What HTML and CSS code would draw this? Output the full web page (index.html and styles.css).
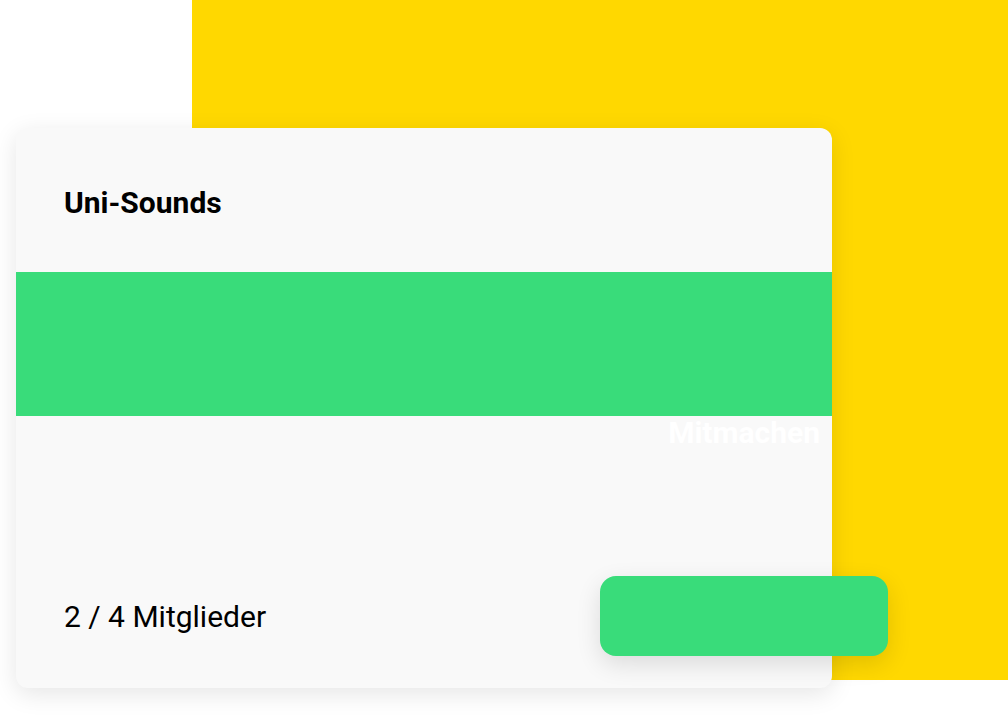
FILE: index.html
```html
<!DOCTYPE html>
<html lang="de">
<head>
<meta charset="utf-8">
<title>Uni-Sounds</title>
<link rel="stylesheet" href="styles.css">
</head>
<body>
<div class="stage">
  <div class="backdrop"></div>
  <section class="card">
    <header class="card-head">
      <h2 class="card-title">Uni-Sounds</h2>
    </header>
    <div class="card-band"></div>
    <div class="card-body">
      <span class="join-label">Mitmachen</span>
    </div>
    <footer class="card-foot">
      <span class="members">2 / 4 Mitglieder</span>
      <button class="join-btn" type="button" aria-label="Mitmachen"></button>
    </footer>
  </section>
</div>
</body>
</html>
```
FILE: styles.css
```css
html, body {
  margin: 0;
  padding: 0;
  background: #ffffff;
}
body {
  font-family: Roboto, "Liberation Sans", sans-serif;
  width: 1008px;
  height: 720px;
  overflow: hidden;
}
.stage {
  position: relative;
  width: 1008px;
  height: 720px;
  padding-top: 128px;
  padding-left: 16px;
  box-sizing: border-box;
}
.backdrop {
  position: absolute;
  left: 192px;
  top: 0;
  width: 816px;
  height: 680px;
  background: #FFD800;
}
.card {
  position: relative;
  width: 816px;
  height: 560px;
  background: #f9f9f9;
  border-radius: 12px;
  box-shadow: 0 6px 24px rgba(0, 0, 0, 0.10);
  display: flex;
  flex-direction: column;
}
.card-head {
  height: 144px;
  box-sizing: border-box;
  padding: 5px 48px 0;
  display: flex;
  align-items: center;
}
.card-title {
  margin: 0;
  font-size: 30px;
  font-weight: 700;
  color: #000;
}
.card-band {
  height: 144px;
  background: #39DC7A;
}
.card-body {
  flex: 1;
  display: flex;
  justify-content: flex-end;
  align-items: flex-start;
  padding-right: 12px;
}
.join-label {
  font-size: 30px;
  font-weight: 700;
  color: #ffffff;
  margin-top: -1px;
}
.card-foot {
  height: 80px;
  margin-bottom: 32px;
  margin-right: -56px;
  padding-left: 48px;
  display: flex;
  align-items: center;
  justify-content: space-between;
}
.members {
  font-size: 30px;
  color: #000;
}
.join-btn {
  width: 288px;
  height: 80px;
  border: 0;
  border-radius: 16px;
  background: #39DC7A;
  box-shadow: 0 8px 24px rgba(0, 0, 0, 0.12);
  padding: 0;
}
```
